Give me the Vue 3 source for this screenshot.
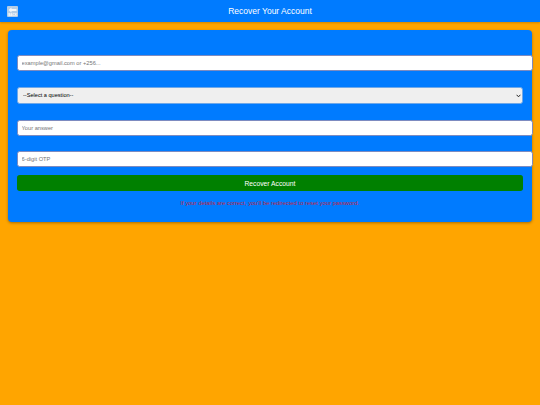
<template>
  <div class="page">
    <header class="top-bar">
      <button type="button" class="back-btn" aria-label="Back">
        <svg width="11" height="11" viewBox="0 0 11 11">
          <rect width="11" height="11" rx="1" fill="#b4cde6" />
          <path d="M1.5 4 L4.5 1.5 V3 H9.5 V5 H4.5 V6.5 Z" fill="#f4f8fb" />
          <text x="5.5" y="10" text-anchor="middle" class="back-text">BACK</text>
        </svg>
      </button>
      <h1 class="title">Recover Your Account</h1>
    </header>

    <form class="card" @submit.prevent>
      <input v-model="form.contact" class="field" type="text" placeholder="example@gmail.com or +256..." />

      <div class="select-wrap">
        <select v-model="form.question" class="select">
          <option value="">--Select a question--</option>
          <option v-for="q in questions" :key="q" :value="q">{{ q }}</option>
        </select>
        <svg class="chevron" width="5" height="4" viewBox="0 0 5 4">
          <path d="M0.6 0.8 L2.5 2.8 L4.4 0.8" fill="none" stroke="#222222" stroke-width="1" />
        </svg>
      </div>

      <input v-model="form.answer" class="field answer" type="text" placeholder="Your answer" />
      <input v-model="form.otp" class="field otp" type="text" placeholder="6-digit OTP" />

      <button type="submit" class="submit">Recover Account</button>
      <p class="note">If your details are correct, you'll be redirected to reset your password.</p>
    </form>
  </div>
</template>

<script setup>
import { reactive } from 'vue'

const questions = ['What is your favourite colour?', 'What was your first school?']

const form = reactive({
  contact: '',
  question: '',
  answer: '',
  otp: ''
})
</script>

<style>
html,
body {
  margin: 0;
  background: #ffa500;
}
</style>

<style scoped>
.page {
  min-height: 405px;
  background: #ffa500;
  font-family: "Liberation Sans", Arial, sans-serif;
}

.top-bar {
  position: relative;
  display: flex;
  align-items: center;
  justify-content: center;
  height: 22px;
  background: #007bff;
  box-shadow: 0 1px 2px rgba(0, 0, 0, 0.2);
}

.back-btn {
  position: absolute;
  left: 7px;
  top: 6px;
  padding: 0;
  border: none;
  background: none;
  line-height: 0;
}

.back-text {
  font-family: "Liberation Sans", Arial, sans-serif;
  font-size: 3px;
  font-weight: bold;
  fill: #ffffff;
}

.title {
  margin: 0;
  color: #ffffff;
  font-size: 8.5px;
  font-weight: normal;
}

.card {
  display: flex;
  flex-direction: column;
  align-items: flex-start;
  width: 506px;
  height: 167.2px;
  margin: 8px 8px 0 8.3px;
  padding: 25.3px 9px 0 8.7px;
  background: #007bff;
  border-radius: 4px;
  box-shadow: 0 1px 3px rgba(0, 0, 0, 0.35);
}

.field {
  box-sizing: content-box;
  flex: none;
  width: 100%;
  height: 8px;
  padding: 3px 4.6px 3px 3.6px;
  margin: 0 0 16px;
  border: 0.7px solid #7d8bc0;
  border-radius: 2.7px;
  background: #ffffff;
  font-family: inherit;
  font-size: 5.7px;
  outline: none;
}

.field::placeholder {
  color: #757575;
}

.answer {
  margin-bottom: 15.4px;
}

.select-wrap {
  position: relative;
  flex: none;
  width: 100%;
  margin: 0 0 16.5px;
}

.select {
  display: block;
  box-sizing: border-box;
  width: 100%;
  height: 16.3px;
  padding: 0 5px;
  border: 0.7px solid #6fa8e8;
  border-radius: 2.7px;
  background-color: #efefef;
  color: #000000;
  font-family: inherit;
  font-size: 5.6px;
  appearance: none;
  outline: none;
}

.chevron {
  position: absolute;
  top: 6.5px;
  right: 1.5px;
}

.otp {
  margin-bottom: 8px;
}

.submit {
  flex: none;
  width: 100%;
  height: 16px;
  padding: 0;
  border: none;
  border-radius: 2.7px;
  background: #008000;
  color: #ffffff;
  font-family: inherit;
  font-size: 6.75px;
}

.note {
  width: 100%;
  margin: 8px 0 0;
  color: #c41f3a;
  font-size: 5.85px;
  line-height: 8px;
  text-align: center;
}
</style>
